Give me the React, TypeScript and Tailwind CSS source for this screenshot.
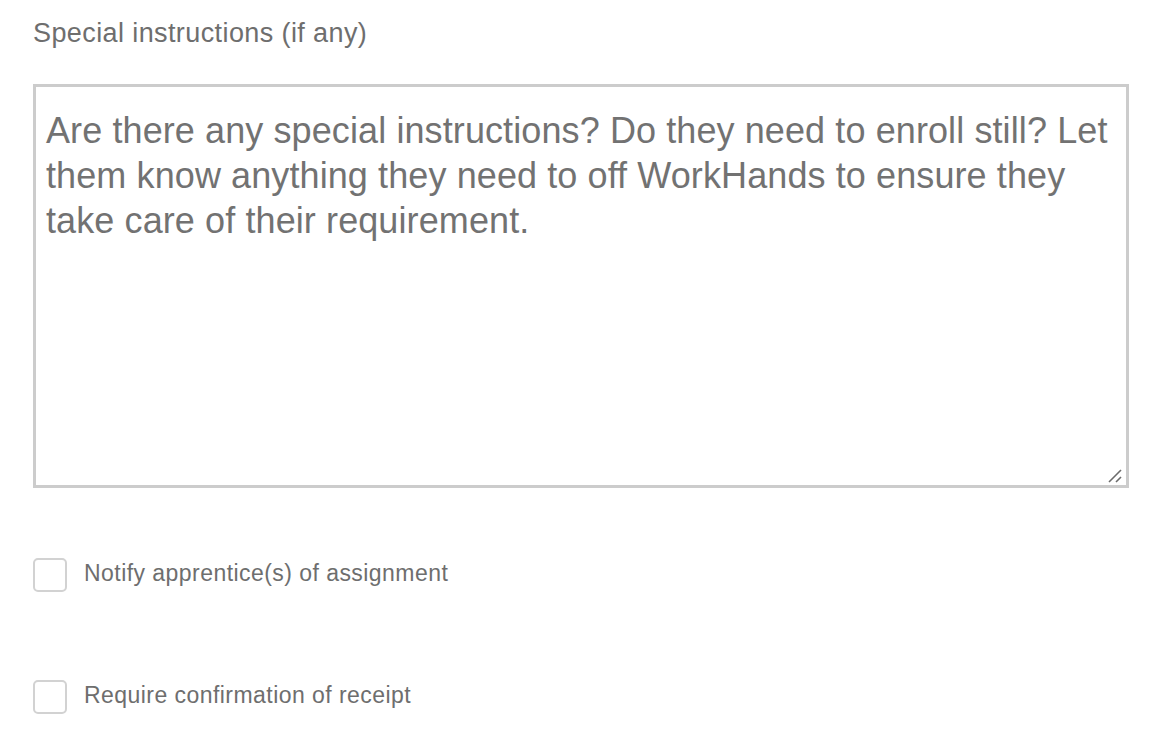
import React from "react";

export default function App() {
  const font = { fontFamily: '"Liberation Sans", Arial, Helvetica, sans-serif' };
  return (
    <div className="w-[1162px] h-[740px] bg-white overflow-hidden" style={font}>
      <div className="pl-[33px] pr-[33px] pt-[17px]">
        <label className="block text-[27px] leading-[32px] tracking-[0.4px] text-[#6e6e6e]">
          Special instructions (if any)
        </label>
        <div className="relative mt-[35px] w-[1096px] h-[404px]">
          <textarea
            className="block w-full h-full resize-none border-[3px] border-[#cccccc] bg-white text-[#727272] text-[36px] leading-[45px] pl-[10px] pr-[10px] pt-[21px] outline-none tracking-[0.1px]"
            style={font}
            defaultValue="Are there any special instructions? Do they need to enroll still? Let them know anything they need to off WorkHands to ensure they take care of their requirement."
          />
          <svg
            className="absolute right-[6px] bottom-[4px] pointer-events-none"
            width="16"
            height="16"
            viewBox="0 0 16 16"
          >
            <line x1="2" y1="14" x2="14" y2="2" stroke="#6b6b6b" strokeWidth="1.6" />
            <line x1="9" y1="14" x2="14" y2="9" stroke="#6b6b6b" strokeWidth="1.6" />
          </svg>
        </div>
        <div className="mt-[70px] flex flex-col gap-[88px]">
          <label className="flex items-start gap-[17px] h-[34px]">
            <span className="w-[34px] h-[34px] rounded-[5px] border-2 border-[#d2d2d2] bg-white shrink-0" />
            <span className="text-[23px] leading-[34px] mt-[-2px] tracking-[0.45px] text-[#6e6e6e]">
              Notify apprentice(s) of assignment
            </span>
          </label>
          <label className="flex items-start gap-[17px] h-[34px]">
            <span className="w-[34px] h-[34px] rounded-[5px] border-2 border-[#d2d2d2] bg-white shrink-0" />
            <span className="text-[23px] leading-[34px] mt-[-2px] tracking-[0.45px] text-[#6e6e6e]">
              Require confirmation of receipt
            </span>
          </label>
        </div>
      </div>
    </div>
  );
}
